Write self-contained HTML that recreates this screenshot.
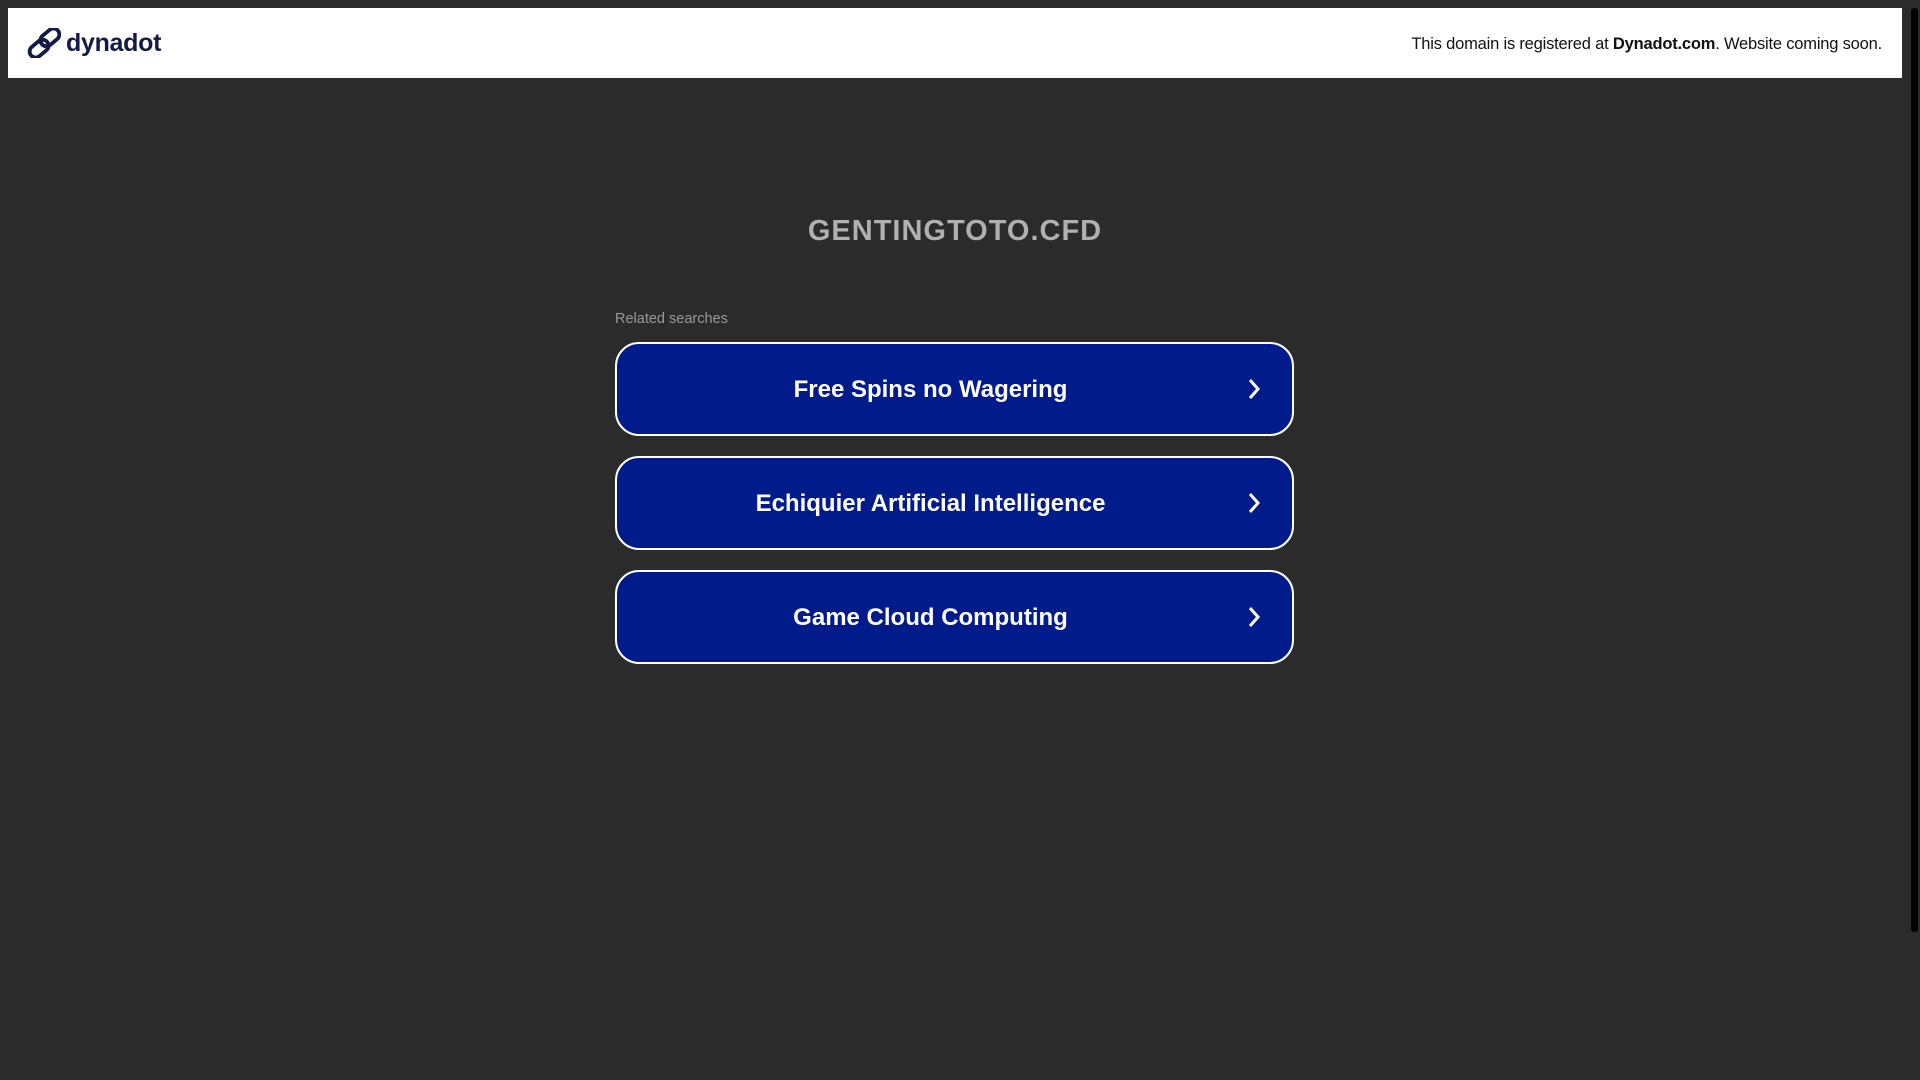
<!DOCTYPE html>
<html><head><style>
html,body{margin:0;padding:0}
body{width:1920px;height:1080px;background:#2b2b2b;position:relative;overflow:hidden;font-family:"Liberation Sans",sans-serif}
.hdr{position:absolute;left:8px;top:8px;width:1894px;height:70px;background:#fff}
.logo{position:absolute;left:19px;top:20px;display:flex;align-items:center}
.logo span{font-weight:bold;font-size:25px;color:#141a45;margin-left:5px;letter-spacing:-0.3px}
.rt{position:absolute;right:20px;top:28px;font-size:16.5px;color:#111;line-height:1;letter-spacing:-0.2px}
.sb{position:absolute;left:1910px;top:0;width:10px;height:1080px;background:#2b2b2b}
.sb div{position:absolute;left:1px;top:8px;width:7px;height:924px;background:#000;border-radius:3px}
h1{position:absolute;left:0;width:1910px;top:215px;margin:0;text-align:center;font-size:29px;color:#b0b0b0;letter-spacing:1px}
.rel{position:absolute;left:615px;top:311px;font-size:14.5px;color:#999}
.btn{position:absolute;left:615px;width:675px;height:90px;border:2px solid #fff;border-radius:24px;background:#021b8a;color:#fff;font-weight:bold;font-size:24px;line-height:92px;text-align:center;box-sizing:content-box}
.btn span{position:relative;left:-24px}
.btn svg{position:absolute;right:31px;top:34px}
</style></head><body>
<div class="hdr">
 <div class="logo">
  <svg width="34" height="30" viewBox="0 0 34 30" fill="none" stroke="#141a45" stroke-width="3.8">
   <rect x="-8" y="-6" width="21" height="12" rx="6" transform="translate(21 11) rotate(-40)"/>
   <rect x="-13" y="-6" width="21" height="12" rx="6" transform="translate(14 19) rotate(-40)"/>
  </svg>
  <span>dynadot</span>
 </div>
 <div class="rt">This domain is registered at <b>Dynadot.com</b>. Website coming soon.</div>
</div>
<div class="sb"><div></div></div>
<h1>GENTINGTOTO.CFD</h1>
<div class="rel">Related searches</div>
<div class="btn" style="top:342px"><span>Free Spins no Wagering</span><svg width="14" height="22" viewBox="0 0 14 22"><path d="M3 2 L11 11 L3 20" fill="none" stroke="#fff" stroke-width="3"/></svg></div>
<div class="btn" style="top:456px"><span>Echiquier Artificial Intelligence</span><svg width="14" height="22" viewBox="0 0 14 22"><path d="M3 2 L11 11 L3 20" fill="none" stroke="#fff" stroke-width="3"/></svg></div>
<div class="btn" style="top:570px"><span>Game Cloud Computing</span><svg width="14" height="22" viewBox="0 0 14 22"><path d="M3 2 L11 11 L3 20" fill="none" stroke="#fff" stroke-width="3"/></svg></div>
</body></html>
